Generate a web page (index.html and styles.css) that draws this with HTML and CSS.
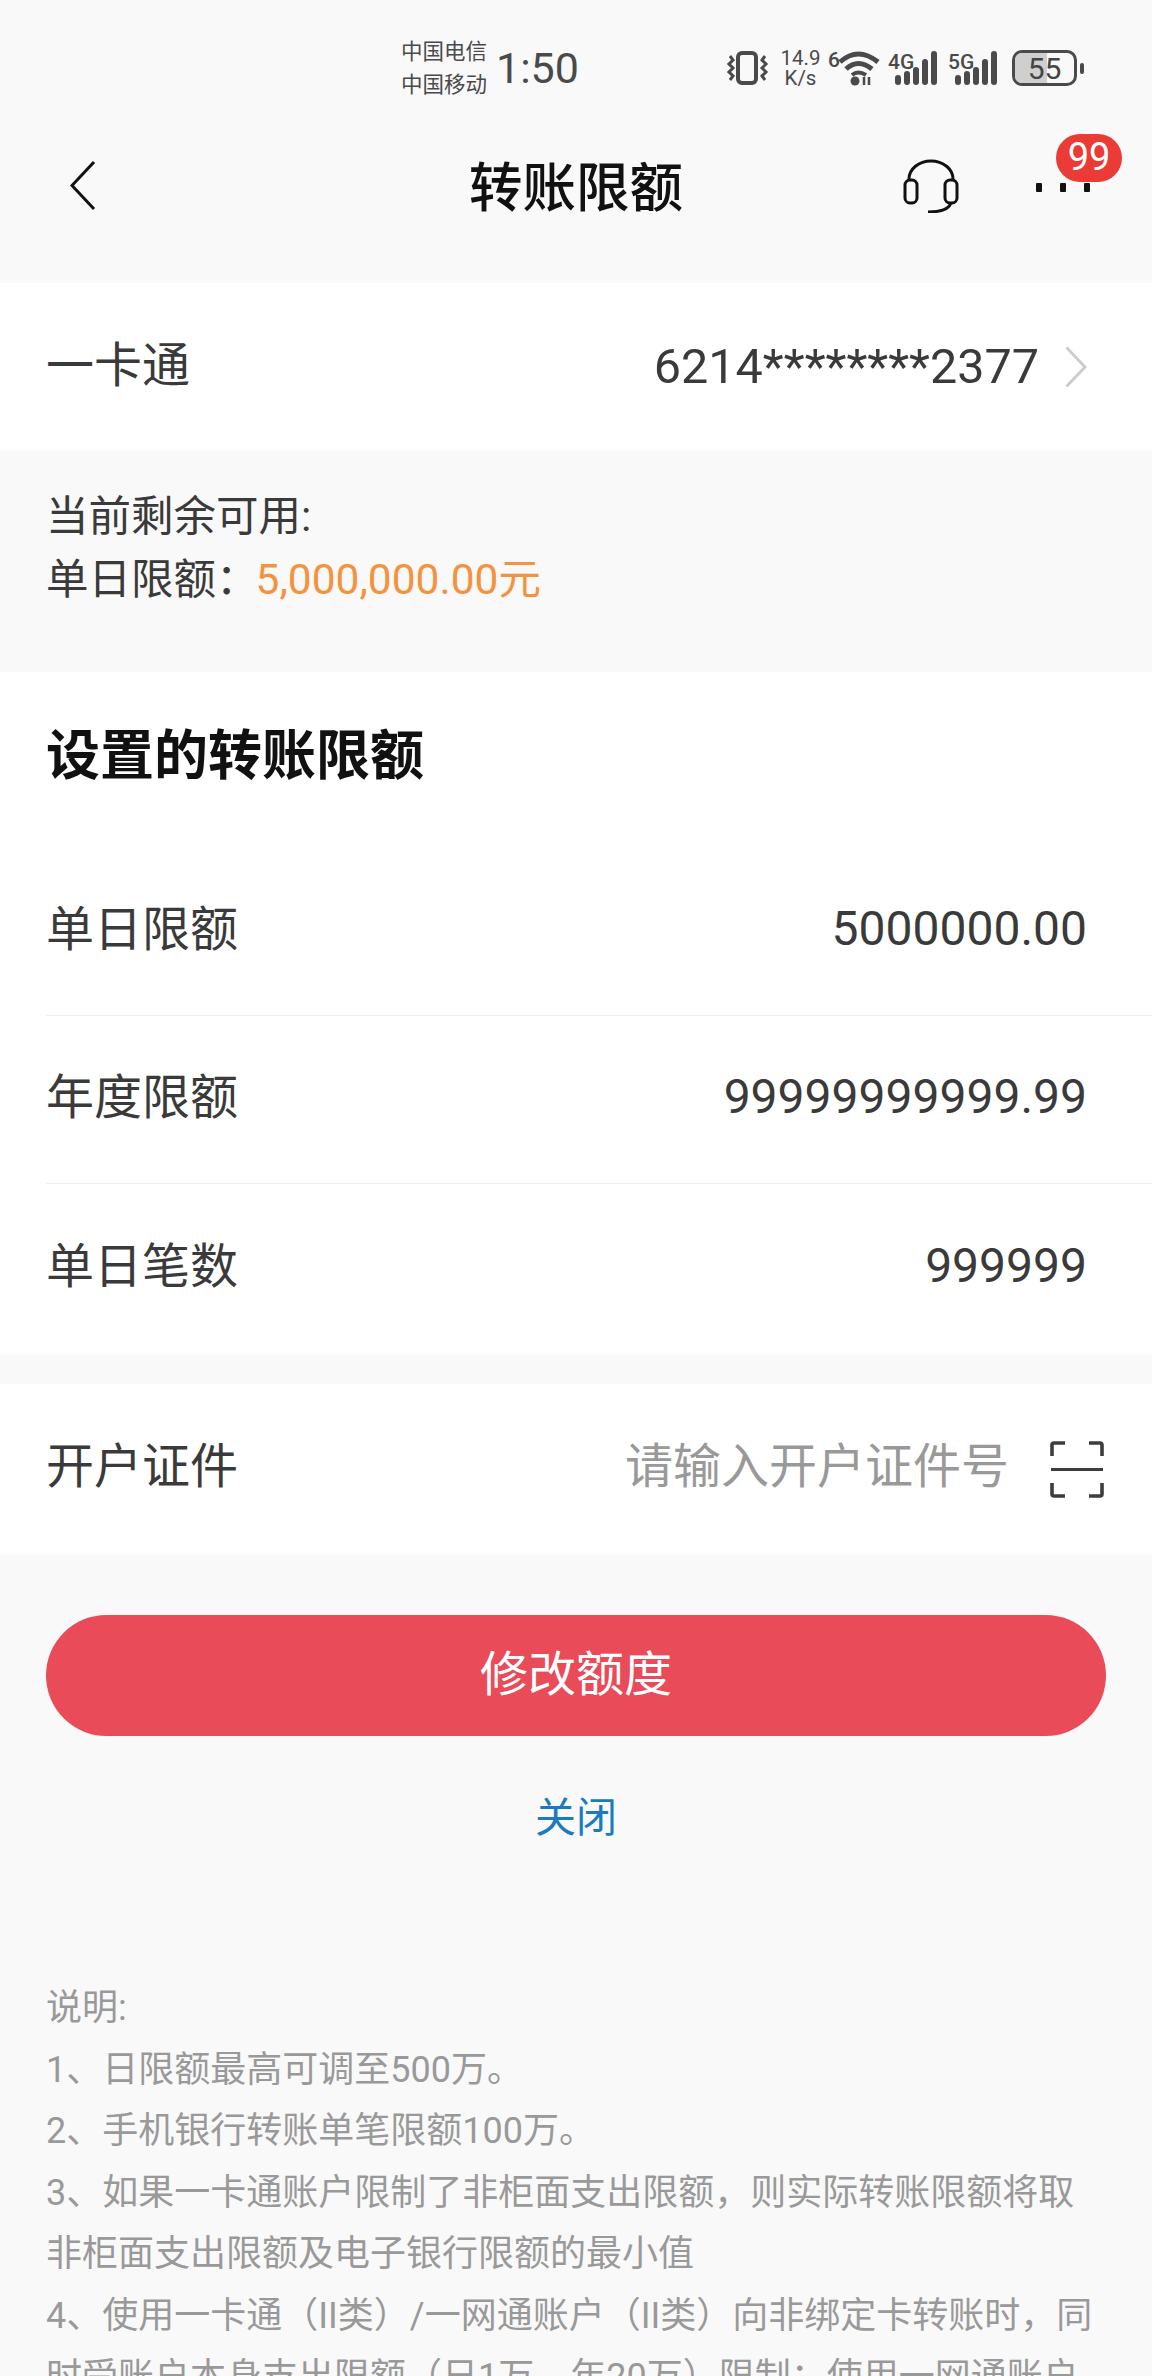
FILE: index.html
```html
<!DOCTYPE html>
<html lang="zh-CN">

<head>
    <meta charset="UTF-8">
    <meta name="viewport" content="width=device-width, initial-scale=1.0">
    <title>转账限额</title>
    <link rel="stylesheet" href="styles.css">
</head>

<body>
    <header class="top">
        <div class="status">
            <div class="carrier">
                <span>中国电信</span>
                <span>中国移动</span>
            </div>
            <div class="time">1:50</div>
            <div class="status-icons">
                <svg class="ic-vibrate" width="47" height="36" viewBox="0 0 47 36" fill="none" stroke="#4a4a4a">
                    <rect x="13" y="3" width="18" height="30" rx="4" stroke-width="4"/>
                    <path d="M5 6l3 4-4 4 4 4-4 4 4 4-3 4M40 6l-3 4 4 4-4 4 4 4-4 4 3 4" stroke-width="3"/>
                </svg>
                <div class="speed">
                    <span>14.9</span>
                    <span>K/s</span>
                </div>
                <svg class="ic-wifi" width="52" height="36" viewBox="0 0 52 36" fill="none" stroke="#4a4a4a">
                    <text class="svg-label" x="0" y="17" font-size="21" fill="#4a4a4a" stroke="none">6</text>
                    <path d="M12 12Q30 -4 50 12M18 19Q30 8 44 19" stroke-width="5"/>
                    <path d="M24 25Q30 20 38 25" stroke-width="4"/>
                    <circle cx="27" cy="31" r="4.500" fill="#4a4a4a" stroke="none"/>
                    <path d="M36 27v8M41 27v8" stroke-width="2.500"/>
                </svg>
                <svg class="ic-signal" width="49" height="36" viewBox="0 0 49 36" fill="#4a4a4a">
                    <text class="svg-label" x="0" y="19" font-size="21">4G</text>
                    <rect x="7" y="25" width="6" height="10" rx="3"/>
                    <rect x="16" y="21" width="6" height="14" rx="3"/>
                    <rect x="25" y="17" width="6" height="18" rx="3"/>
                    <rect x="34" y="9" width="6" height="26" rx="3"/>
                    <rect x="43" y="1" width="6" height="34" rx="3"/>
                </svg>
                <svg class="ic-signal" width="49" height="36" viewBox="0 0 49 36" fill="#4a4a4a">
                    <text class="svg-label" x="0" y="19" font-size="21">5G</text>
                    <rect x="7" y="25" width="6" height="10" rx="3"/>
                    <rect x="16" y="21" width="6" height="14" rx="3"/>
                    <rect x="25" y="17" width="6" height="18" rx="3"/>
                    <rect x="34" y="9" width="6" height="26" rx="3"/>
                    <rect x="43" y="1" width="6" height="34" rx="3"/>
                </svg>
                <div class="battery">
                    <div class="battery-body">
                        <span class="battery-fill"></span>
                        <span class="battery-num">55</span>
                    </div>
                    <span class="battery-nub"></span>
                </div>
            </div>
        </div>
        <nav class="nav">
            <svg class="ic-back" width="26" height="50" viewBox="0 0 26 50" fill="none" stroke="#111" stroke-width="3">
                <path d="M24 1L2 24.500L24 48"/>
            </svg>
            <h1 class="nav-title">转账限额</h1>
            <div class="nav-actions">
                <svg width="56" height="54" viewBox="0 0 56 54" fill="none" stroke="#111" stroke-width="3">
                    <path d="M6 22V20a22 18 0 0 1 44 0V22"/>
                    <rect x="2" y="21" width="12" height="23" rx="5"/>
                    <rect x="42" y="21" width="12" height="23" rx="5"/>
                    <path d="M48 44c-2 6-10 9-23 9"/>
                </svg>
                <div class="more">
                    <span></span><span></span><span></span>
                    <b class="badge">99</b>
                </div>
            </div>
        </nav>
    </header>

    <section class="card-row">
        <span class="cjk">一卡通</span>
        <div class="card-no">
            <span>6214********2377</span>
            <svg width="22" height="42" viewBox="0 0 22 42" fill="none" stroke="#cccccc" stroke-width="3">
                <path d="M1.500 1.500L20 21L1.500 40.500"/>
            </svg>
        </div>
    </section>

    <section class="remain">
        <p>当前剩余可用:</p>
        <p>单日限额：<span class="orange">5,000,000.00元</span></p>
    </section>

    <section class="limits">
        <h2 class="limits-title">设置的转账限额</h2>
        <div class="limit-row">
            <span class="cjk">单日限额</span>
            <span class="num">5000000.00</span>
        </div>
        <div class="limit-row">
            <span class="cjk">年度限额</span>
            <span class="num">99999999999.99</span>
        </div>
        <div class="limit-row">
            <span class="cjk">单日笔数</span>
            <span class="num">999999</span>
        </div>
    </section>

    <section class="id-row">
        <span class="cjk">开户证件</span>
        <div class="id-right">
            <span class="placeholder cjk">请输入开户证件号</span>
            <svg width="54" height="57" viewBox="0 0 54 57" fill="none" stroke="#3d3d3d">
                <path d="M2 15V4a2 2 0 0 1 2-2H15M39 2H50a2 2 0 0 1 2 2V15M2 42V53a2 2 0 0 0 2 2H15M39 55H50a2 2 0 0 0 2-2V42" stroke-width="3.600"/>
                <path d="M1 28.500H53" stroke-width="3"/>
            </svg>
        </div>
    </section>

    <div class="actions">
        <button class="btn-main" type="button">修改额度</button>
        <a class="btn-close" href="#">关闭</a>
    </div>

    <section class="notes">
        <p>说明:</p>
        <p>1、日限额最高可调至500万。</p>
        <p>2、手机银行转账单笔限额100万。</p>
        <p>3、如果一卡通账户限制了非柜面支出限额，则实际转账限额将取非柜面支出限额及电子银行限额的最小值</p>
        <p>4、使用一卡通（II类）/一网通账户（II类）向非绑定卡转账时，同时受账户本身支出限额（日1万，年20万）限制；使用一网通账户</p>
    </section>
</body>

</html>
```

FILE: styles.css
```css
* {
    padding: 0;
    margin: 0;
    box-sizing: border-box;
}

body {
    width: 1152px;
    height: 2376px;
    overflow: hidden;
    background: #f9f9f9;
    color: #3a3a3a;
    font-family: Roboto, "Noto Sans CJK SC", sans-serif;
}

svg {
    display: block;
    flex-shrink: 0;
}

/* cjk glyphs sit low next to roboto digits, pull them up */
.cjk {
    margin-bottom: 14px;
}
.num {
    margin-bottom: 7px;
}

.top {
    height: 283px;
}

.status {
    display: flex;
    align-items: center;
    height: 136px;
    padding: 0 68px 0 401px;
    color: #4a4a4a;
}
.carrier {
    display: flex;
    flex-direction: column;
    font-size: 21.500px;
    line-height: 33px;
    width: 95px;
}
.time {
    font-size: 43px;
}
.status-icons {
    display: flex;
    align-items: center;
    margin-left: auto;
}
.speed {
    display: flex;
    flex-direction: column;
    align-items: center;
    width: 43px;
    margin: 0 6px 0 7px;
    font-size: 20.500px;
    line-height: 20px;
}
.svg-label {
    font-family: Roboto, sans-serif;
    font-weight: 500;
}
.ic-wifi {
    margin-right: 8px;
}
.ic-signal + .ic-signal {
    margin-left: 11px;
}
.battery {
    display: flex;
    align-items: center;
    margin-left: 15px;
}
.battery-body {
    position: relative;
    display: flex;
    align-items: center;
    justify-content: center;
    width: 65px;
    height: 36px;
    border: 3px solid #4a4a4a;
    border-radius: 10px;
    overflow: hidden;
}
.battery-fill {
    position: absolute;
    left: 0;
    top: 0;
    bottom: 0;
    width: 55%;
    background: #cfcfcf;
}
.battery-num {
    position: relative;
    font-size: 30px;
    color: #444;
}
.battery-nub {
    width: 4px;
    height: 11px;
    margin-left: 3px;
    border-radius: 2px;
    background: #4a4a4a;
}

.nav {
    display: grid;
    grid-template-columns: 1fr auto 1fr;
    align-items: center;
    height: 100px;
    padding: 0 62px 0 70px;
}
.nav-title {
    margin: 0 8px 6px 0;
    font-size: 53.500px;
    font-weight: 500;
    color: #111;
}
.nav-actions {
    display: flex;
    align-items: center;
    justify-content: flex-end;
    gap: 77px;
}
.more {
    position: relative;
    display: flex;
    gap: 18px;
    margin-top: 2px;
}
.more span {
    width: 6px;
    height: 9px;
    border-radius: 1px;
    background: #111;
}
.badge {
    position: absolute;
    top: -49px;
    left: 20px;
    width: 66px;
    height: 48px;
    border-radius: 24px;
    background: #ea3b36;
    color: #fff;
    font-size: 38px;
    font-weight: 400;
    line-height: 46px;
    text-align: center;
}

.card-row {
    display: flex;
    align-items: center;
    justify-content: space-between;
    height: 167px;
    padding: 0 65px 0 46px;
    background: #fff;
    font-size: 48px;
}
.card-row .cjk {
    margin-bottom: 12px;
}
.card-no {
    display: flex;
    align-items: center;
    gap: 26px;
    font-size: 48.500px;
}

.remain {
    height: 222px;
    padding: 35px 46px 0;
    font-size: 42.500px;
    line-height: 63px;
}
.orange {
    margin-left: -3px;
    color: #f5923e;
}

.limits {
    background: #fff;
    padding-left: 46px;
}
.limits-title {
    height: 176px;
    padding-top: 46px;
    font-size: 54px;
    line-height: 78px;
    font-weight: 700;
    color: #111;
}
.limit-row {
    display: flex;
    align-items: center;
    justify-content: space-between;
    height: 168px;
    padding-right: 65px;
    border-bottom: 1.500px solid #eeeeee;
    font-size: 48px;
}
.limit-row:last-child {
    height: 170px;
    border-bottom: none;
}

.id-row {
    display: flex;
    align-items: center;
    justify-content: space-between;
    height: 170px;
    margin-top: 30px;
    padding: 0 48px 0 46px;
    background: #fff;
    font-size: 48px;
}
.id-right {
    display: flex;
    align-items: center;
    gap: 41px;
}
.placeholder {
    color: #999;
}

.actions {
    display: flex;
    flex-direction: column;
    align-items: center;
    padding: 61px 46px 0;
}
.btn-main {
    width: 100%;
    height: 121px;
    padding-bottom: 12px;
    border: none;
    border-radius: 61px;
    background: #e94b59;
    color: #fff;
    font-family: inherit;
    font-size: 48px;
}
.btn-close {
    margin-top: 52px;
    color: #1a7bc2;
    font-size: 41px;
    line-height: 60px;
    text-decoration: none;
}

.notes {
    margin-top: 130px;
    padding: 0 46px;
    color: #999;
    font-size: 36px;
    line-height: 61.500px;
}
```
